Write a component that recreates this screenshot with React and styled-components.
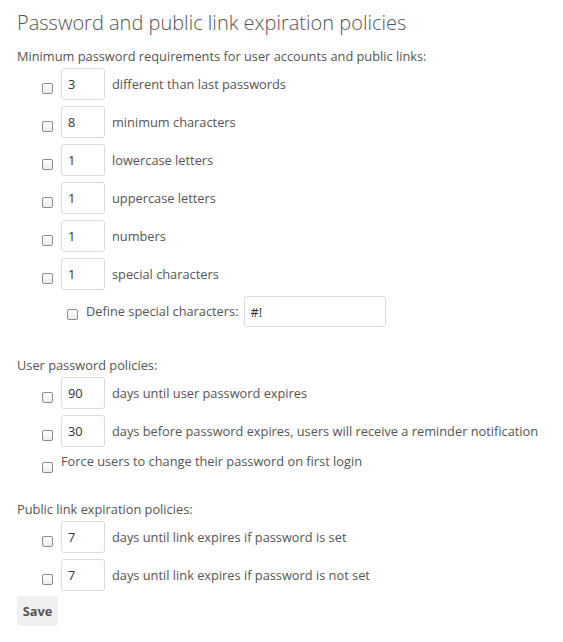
import React from "react";
import styled, { createGlobalStyle } from "styled-components";

const Global = createGlobalStyle`
  html, body { margin: 0; padding: 0; background: #fff; }
  body {
    font-family: "Open Sans", "Liberation Sans", sans-serif;
    font-size: 12.8px;
    color: #555;
  }
`;

const Page = styled.div`
  padding: 8px 17px 0 17px;
`;

const Heading = styled.h2`
  margin: 0 0 9px 0;
  font-size: 20px;
  line-height: 30px;
  font-weight: 300;
  color: #555;
`;

const SectionLabel = styled.p`
  margin: ${(p) => p.$top || 0}px 0 0 0;
  line-height: 18px;
`;

const List = styled.ul`
  list-style: none;
  margin: 0;
  padding: 0 0 0 ${(p) => p.$indent || 25}px;
`;

const Row = styled.li`
  display: flex;
  align-items: flex-start;
  padding: 3px 0;
`;

const Check = styled.input.attrs({ type: "checkbox" })`
  appearance: none;
  -webkit-appearance: none;
  box-sizing: border-box;
  width: 11px;
  height: 11px;
  margin: ${(p) => p.$top ?? 15}px 8px 0 0;
  border: 1px solid #8c8c8c;
  border-radius: 2px;
  background: linear-gradient(#ffffff, #ececec);
  flex: none;
`;

const NumInput = styled.input`
  box-sizing: border-box;
  width: ${(p) => p.$w || 44}px;
  height: ${(p) => p.$h || 32}px;
  margin: 0 ${(p) => p.$gap ?? 7}px 0 0;
  padding: 0 6px;
  border: 1px solid #dbdbdb;
  border-radius: 3px;
  background: #fff;
  font-family: inherit;
  font-size: 12.8px;
  color: #333;
  outline: none;
  flex: none;
`;

const Text = styled.span`
  line-height: ${(p) => p.$lh || 32}px;
  margin-right: ${(p) => p.$mr || 0}px;
  white-space: nowrap;
`;

const PlainRow = styled.div`
  display: flex;
  align-items: flex-start;
  padding: 2px 0 0 25px;
`;

const SaveButton = styled.button`
  box-sizing: border-box;
  margin-top: 2px;
  width: 41px;
  height: 30px;
  padding: 0;
  border: none;
  border-radius: 3px;
  background: #f0f0f0;
  font-family: inherit;
  font-size: 12.8px;
  font-weight: 700;
  color: #555;
`;

const minRows = [
  ["3", "different than last passwords"],
  ["8", "minimum characters"],
  ["1", "lowercase letters"],
  ["1", "uppercase letters"],
  ["1", "numbers"],
  ["1", "special characters"],
];

const userRows = [
  ["90", "days until user password expires"],
  ["30", "days before password expires, users will receive a reminder notification"],
];

const linkRows = [
  ["7", "days until link expires if password is set"],
  ["7", "days until link expires if password is not set"],
];

function NumRows({ rows }) {
  return rows.map(([v, label], i) => (
    <Row key={i}>
      <Check />
      <NumInput defaultValue={v} />
      <Text>{label}</Text>
    </Row>
  ));
}

export default function App() {
  return (
    <Page>
      <Global />
      <Heading>Password and public link expiration policies</Heading>
      <SectionLabel>Minimum password requirements for user accounts and public links:</SectionLabel>
      <List>
        <NumRows rows={minRows} />
      </List>
      <List $indent={50}>
        <Row>
          <Check $top={13} />
          <Text $lh={30} $mr={5}>Define special characters:</Text>
          <NumInput $w={142} $h={31} defaultValue="#!" />
        </Row>
      </List>
      <SectionLabel $top={26}>User password policies:</SectionLabel>
      <List>
        <NumRows rows={userRows} />
      </List>
      <PlainRow>
        <Check $top={10} />
        <Text $lh={18}>Force users to change their password on first login</Text>
      </PlainRow>
      <SectionLabel $top={27}>Public link expiration policies:</SectionLabel>
      <List>
        <NumRows rows={linkRows} />
      </List>
      <SaveButton>Save</SaveButton>
    </Page>
  );
}
